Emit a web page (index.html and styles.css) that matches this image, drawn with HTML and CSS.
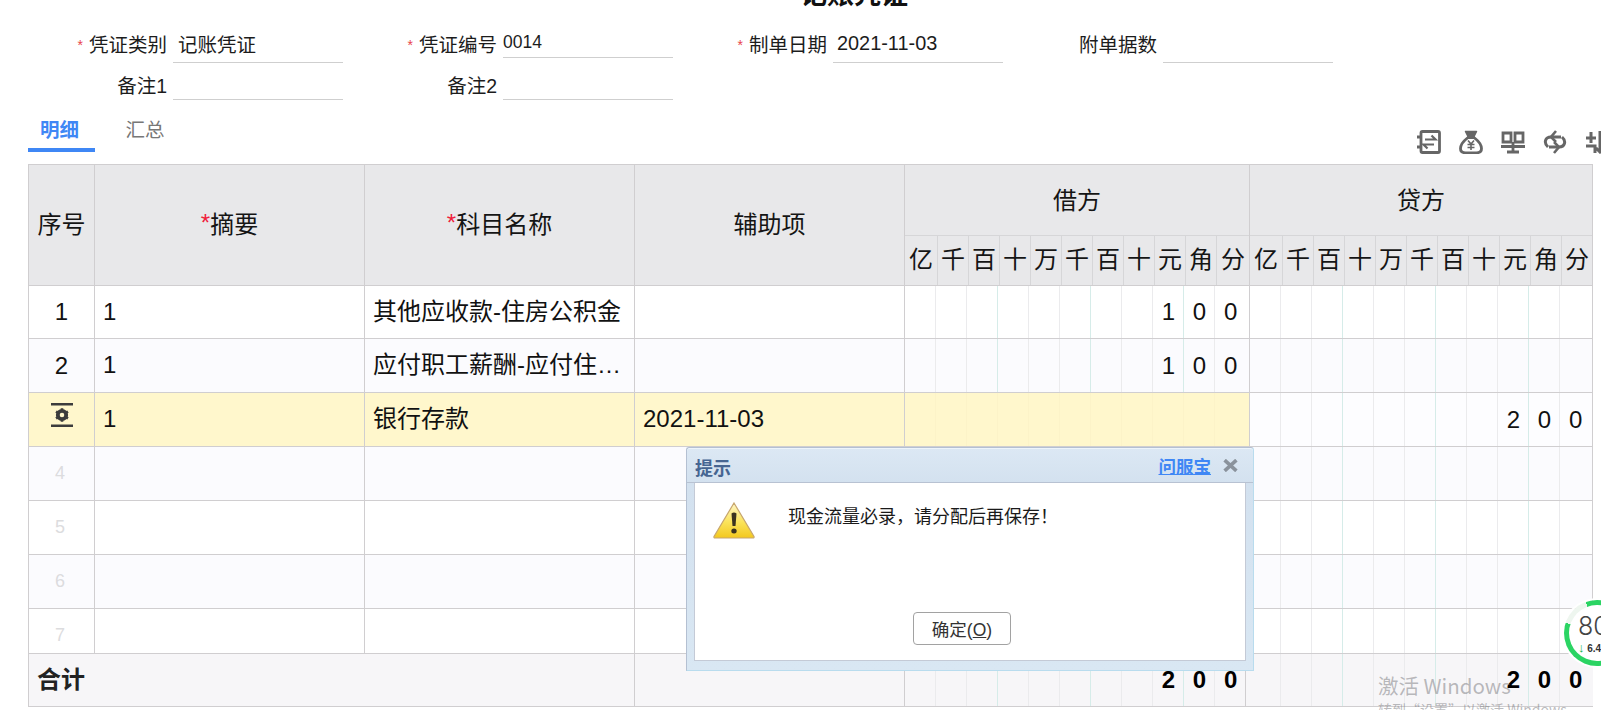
FILE: index.html
```html
<!DOCTYPE html>
<html lang="zh-CN">
<head>
<meta charset="utf-8">
<title>记账凭证</title>
<link rel="stylesheet" href="styles.css">
</head>
<body>
<div class="page">
  <h1 class="title"><span>记账凭证</span></h1>
  <div class="form">
    <div class="field"><label class="req">凭证类别</label><div class="input type-val">记账凭证</div></div>
    <div class="field"><label class="req">凭证编号</label><div class="input no-val">0014</div></div>
    <div class="field"><label class="req">制单日期</label><div class="input date-val">2021-11-03</div></div>
    <div class="field"><label>附单据数</label><div class="input"></div></div>
    <div class="field second"><label>备注1</label><div class="input"></div></div>
    <div class="field second"><label>备注2</label><div class="input"></div></div>
  </div>
  <div class="tabbar">
    <div class="tabs">
      <div class="tab active">明细</div>
      <div class="tab">汇总</div>
    </div>
    <div class="tools">
      <svg class="tool" viewBox="0 0 24 24" fill="none" stroke="#666" stroke-width="2.800"><rect x="4" y="1.500" width="18.500" height="21" rx="1.500"/><path d="M0 7h5M0 17h5"/><path d="M8 9.500h10.500L14.500 5.500M17 14.500H6.500l4 4" stroke-width="2.200"/></svg>
      <svg class="tool" viewBox="0 0 24 24" fill="none" stroke="#666" stroke-width="2.800"><path d="M6.500 1.500h11l-3 6h-5z" fill="#666" stroke-width="1.500" stroke-linejoin="round"/><path d="M9 7.500C4.500 11 1.500 15 1.500 18.500c0 3 2 4.300 5 4.300h11c3 0 5-1.300 5-4.300C22.500 15 19.500 11 15 7.500z"/><path d="M9 10.500 12 14l3-3.500M8.500 14.500h7M8.500 17.500h7M12 14v6" stroke-width="1.600"/></svg>
      <svg class="tool" viewBox="0 0 24 24" fill="none" stroke="#666" stroke-width="2.800"><path d="M2 3h8v9H2zM14 3h8v9h-8z"/><path d="M0 16.500h24M12 12v10M6 22h12" /></svg>
      <svg class="tool" viewBox="0 0 24 24" fill="none" stroke="#666" stroke-width="3"><path d="M18 7H8c-6 0-7.500 6-3 10M6 17h10c6 0 7.500-6 3-10"/><path d="m13 1-5 6 5 5M11 12l5 5-5 6" stroke-width="2.600"/></svg>
      <svg class="tool" viewBox="0 0 24 24" fill="none" stroke="#666" stroke-width="3"><path d="M1 8h10M6 2v11M1 16h9v7M15 1v21M11 18l4 4 4-4M21 4h4M21 10h4"/></svg>
    </div>
  </div>

  <div class="voucher">
    <div class="thead">
      <div class="hcell">序号</div>
      <div class="hcell"><span class="star">*</span>摘要</div>
      <div class="hcell"><span class="star">*</span>科目名称</div>
      <div class="hcell">辅助项</div>
      <div class="hgroup">
        <div class="hgroup-name">借方</div>
        <div class="units"><span>亿</span><span>千</span><span>百</span><span>十</span><span>万</span><span>千</span><span>百</span><span>十</span><span>元</span><span>角</span><span>分</span></div>
      </div>
      <div class="hgroup">
        <div class="hgroup-name">贷方</div>
        <div class="units"><span>亿</span><span>千</span><span>百</span><span>十</span><span>万</span><span>千</span><span>百</span><span>十</span><span>元</span><span>角</span><span>分</span></div>
      </div>
    </div>

    <div class="tbody">
      <div class="row">
        <div class="cell seq">1</div><div class="cell">1</div><div class="cell">其他应收款-住房公积金</div><div class="cell"></div>
        <div class="money"><span class="d yuan">1</span><span class="d jiao">0</span><span class="d fen">0</span></div>
        <div class="money"></div>
      </div>
      <div class="row tint">
        <div class="cell seq">2</div><div class="cell">1</div><div class="cell">应付职工薪酬-应付住房公积金</div><div class="cell"></div>
        <div class="money"><span class="d yuan">1</span><span class="d jiao">0</span><span class="d fen">0</span></div>
        <div class="money"></div>
      </div>
      <div class="row current">
        <div class="cell seq">
          <svg class="gear" viewBox="0 0 22 24" fill="none"><path d="M0 1.200h22M0 22.800h22" stroke="#3c3c3c" stroke-width="2.400"/><circle cx="11" cy="12" r="4.200" stroke="#3c3c3c" stroke-width="3.800"/><path d="M11 5.200v3M11 15.800v3M5 8.600l2.800 1.600M14.200 13.800l2.800 1.600M5 15.400l2.800-1.600M14.200 10.200 17 8.600" stroke="#3c3c3c" stroke-width="2.600"/></svg>
        </div>
        <div class="cell">1</div><div class="cell">银行存款</div><div class="cell">2021-11-03</div>
        <div class="money"></div>
        <div class="money plain"><span class="d yuan">2</span><span class="d jiao">0</span><span class="d fen">0</span></div>
      </div>
      <div class="row tint"><div class="cell seq ghost">4</div><div class="cell"></div><div class="cell"></div><div class="cell"></div><div class="money"></div><div class="money"></div></div>
      <div class="row"><div class="cell seq ghost">5</div><div class="cell"></div><div class="cell"></div><div class="cell"></div><div class="money"></div><div class="money"></div></div>
      <div class="row tint"><div class="cell seq ghost">6</div><div class="cell"></div><div class="cell"></div><div class="cell"></div><div class="money"></div><div class="money"></div></div>
      <div class="row"><div class="cell seq ghost">7</div><div class="cell"></div><div class="cell"></div><div class="cell"></div><div class="money"></div><div class="money"></div></div>
    </div>

    <div class="tfoot">
      <div class="cell total-label">合计</div>
      <div class="cell"></div>
      <div class="money"><span class="d yuan">2</span><span class="d jiao">0</span><span class="d fen">0</span></div>
      <div class="money"><span class="d yuan">2</span><span class="d jiao">0</span><span class="d fen">0</span></div>
    </div>
  </div>
</div>

<div class="dialog">
  <div class="dialog-head">
    <span class="dialog-title">提示</span>
    <a class="dialog-link">问服宝</a>
    <svg class="dialog-close" viewBox="0 0 14 12"><path d="M1.500 1 12.500 11M12.500 1 1.500 11" stroke="#8a929c" stroke-width="3.400"/></svg>
  </div>
  <div class="dialog-body">
    <div class="dialog-msg">
      <svg class="warn" viewBox="0 0 42 37">
        <defs><linearGradient id="wg" x1="0" y1="0" x2="0" y2="1"><stop offset="0" stop-color="#fff6c8"/><stop offset=".55" stop-color="#fbe35a"/><stop offset="1" stop-color="#f3c81e"/></linearGradient></defs>
        <path d="M21 1 41 34.500q.4 1.500-1 1.500H2q-1.400 0-1-1.500z" fill="url(#wg)" stroke="#c7a66e" stroke-width="1.200"/>
        <path d="M18.500 11.500q2.500-2 5 0L22.500 24h-3z" fill="#3b3320"/>
        <ellipse cx="21" cy="29" rx="2.700" ry="2.500" fill="#3b3320"/>
      </svg>
      <p class="dialog-text">现金流量必录，请分配后再保存！</p>
    </div>
    <div class="dialog-foot"><button class="dialog-btn">确定(<u>O</u>)</button></div>
  </div>
</div>

<div class="speed">
  <div class="speed-inner">
    <div class="speed-num">80</div>
    <div class="speed-sub"><i>↓</i> 6.4K</div>
  </div>
</div>

<div class="watermark">
  <div class="wm-1">激活 Windows</div>
  <div class="wm-2">转到“设置”以激活 Windows。</div>
</div>
</body>
</html>
```

FILE: styles.css
```css
* { box-sizing: border-box; }
html, body { margin: 0; height: 710px; overflow: hidden; background: #fff; }
body {
  font-family: "Liberation Sans", "Noto Sans CJK SC", sans-serif;
  color: #111;
  width: 1601px;
  position: relative;
}
.page { width: 1601px; height: 710px; overflow: hidden; }

.title {
  margin: 0;
  height: 12px;
  overflow: hidden;
  display: flex;
  justify-content: center;
  align-items: flex-end;
  font-size: 27px;
  line-height: 34px;
  font-weight: 700;
  padding-left: 107px;
}
.title span { display: block; flex: none; }

.form {
  display: grid;
  grid-template-columns: repeat(4, 330px);
  grid-auto-rows: 36px;
  padding: 15px 0 0 13px;
  height: 87px;
}
.field {
  display: grid;
  grid-template-columns: 154px 170px;
  column-gap: 6px;
}
.field label {
  font-size: 19.500px;
  line-height: 36px;
  text-align: right;
  color: #1c1c1c;
}
.field label.req::before {
  content: "*";
  color: #e8434c;
  font-size: 14px;
  margin-right: 6px;
  vertical-align: 2px;
}
.field.second { margin-top: 1px; }
.field.second label { padding-top: 4px; }
.input {
  border-bottom: 1px solid #cfcfcf;
  font-size: 19.500px;
  height: 36px;
  line-height: 36px;
  color: #1c1c1c;
}
.type-val { padding-left: 5px; }
.no-val { height: 31px; line-height: 30px; font-size: 17.500px; }
.date-val { padding-left: 4px; line-height: 33px; font-size: 19.900px; }

.tabbar {
  display: flex;
  height: 53px;
  padding-left: 28px;
}
.tabs { display: flex; width: 1389px; flex: none; }
.tab {
  height: 53px;
  width: 104px;
  padding: 17px 4px 0 0;
  font-size: 19.500px;
  line-height: 28px;
  color: #777;
  text-align: center;
}
.tab.active {
  width: 67px;
  color: #3f87f5;
  font-weight: 700;
  border-bottom: 4px solid #3f87f5;
}
.tools { display: flex; flex: none; width: 210px; padding-top: 31px; gap: 18px; }
.tool { width: 24px; height: 24px; flex: none; }

.voucher {
  margin: 12px 0 0 28px;
  width: 1565px;
  border-top: 1px solid #d0ced0;
  border-left: 1px solid #d0ced0;
  font-size: 24px;
}
.thead, .row {
  display: grid;
  grid-template-columns: 66px 270px 270px 270px 345px 343px;
}
.thead {
  height: 121px;
  background: #e8e8ea;
  border-bottom: 1px solid #d0ced0;
  color: #151515;
}
.hcell {
  display: flex;
  align-items: center;
  justify-content: center;
  border-right: 1px solid #d0ced0;
  padding-bottom: 5px;
}
.star { color: #f0203c; }
.hgroup { border-right: 1px solid #d0ced0; display: flex; flex-direction: column; }
.hgroup-name {
  height: 71px;
  line-height: 72px;
  text-align: center;
  border-bottom: 1px solid #d6d6d8;
}
.units {
  flex: 1;
  display: grid;
  grid-template-columns: 33px repeat(9, 31px) 1fr;
}
.units span {
  text-align: center;
  line-height: 47px;
  border-right: 1px solid #d6d6d8;
}
.units span:last-child { border-right: 0; }

.tbody { height: 367px; overflow: hidden; }
.row { height: 54px; border-bottom: 1px solid #d0ced0; background: #fff; }
.row:first-child { height: 53px; }
.row.tint { background: #fbfbfe; }
.row.current { background: #fff7cc; }

.cell {
  border-right: 1px solid #d0ced0;
  padding: 0 8px;
  line-height: 52px;
  white-space: nowrap;
  overflow: hidden;
  text-overflow: ellipsis;
}
.cell.seq {
  padding: 0;
  text-align: center;
  display: flex;
  align-items: center;
  justify-content: center;
}
.cell.ghost { color: #dcdcde; font-size: 18px; padding: 0 3px 2px 0; }
.gear { width: 22px; height: 24px; margin-top: -10px; }

.money {
  display: grid;
  grid-template-columns: repeat(10, 31px) 1fr;
  align-items: center;
  border-right: 1px solid #d0ced0;
  background-image:
    repeating-linear-gradient(to right, transparent 0 92px, #d6ece9 92px 93px),
    repeating-linear-gradient(to right, transparent 0 30px, #ebebed 30px 31px);
  background-size: 310px 100%;
  background-repeat: no-repeat;
}
.current .money:not(.plain) {
  background-image:
    repeating-linear-gradient(to right, transparent 0 30px, #fcf3c8 30px 31px);
}
.money.plain { background-color: #fdfdff; }
.d { grid-row: 1; text-align: center; line-height: 50px; }
.d.yuan { grid-column: 9; }
.d.jiao { grid-column: 10; }
.d.fen { grid-column: 11; text-align: left; padding-left: 9px; }

.tfoot {
  display: grid;
  height: 54px;
  grid-template-columns: 606px 270px 341px 347px;
  background: #f7f6f8;
  border-top: 1px solid #d0ced0;
  border-bottom: 1px solid #d0ced0;
}
.tfoot .total-label { font-weight: 700; line-height: 52px; color: #222; }
.tfoot .d { font-weight: 700; color: #000; }
.tfoot .money:last-child { padding-left: 4px; background-position: 4px 0; border-right: 0; }

.dialog {
  position: absolute;
  left: 686px;
  top: 447px;
  width: 568px;
  height: 224px;
  display: flex;
  flex-direction: column;
  border: 1px solid #b4c0d2;
  border-right-color: #b9dcee;
  border-bottom-color: #b9dcee;
  border-radius: 3px 3px 0 0;
  background: linear-gradient(#dce8f4, #d3e1ef 16%, #d9e7f3);
  box-shadow: inset 0 1px 0 #eef4fa;
}
.dialog-head {
  height: 35px;
  flex: none;
  display: flex;
  align-items: center;
  padding: 0 15px 0 8px;
  border-bottom: 1px solid #b8c2d2;
}
.dialog-title {
  font-size: 18px;
  font-weight: 700;
  color: #466592;
  margin-right: auto;
  padding-top: 3px;
}
.dialog-link {
  font-size: 17.500px;
  font-weight: 700;
  color: #3f87f5;
  text-decoration: underline;
  margin-right: 12px;
}
.dialog-close { width: 15px; height: 13px; flex: none; }
.dialog-body {
  flex: 1;
  margin: 0 7px 9px 7px;
  background: #fff;
  border: 1px solid #c4cad6;
  border-top: 0;
  display: flex;
  flex-direction: column;
  justify-content: space-between;
}
.dialog-msg { display: flex; padding: 19px 0 0 18px; }
.warn { width: 42px; height: 37px; flex: none; }
.dialog-text {
  margin: 3px 0 0 33px;
  font-size: 18px;
  line-height: 24px;
  color: #1a1a1a;
}
.dialog-foot { display: flex; justify-content: center; padding: 0 16px 15px 0; }
.dialog-btn {
  width: 98px;
  height: 33px;
  font: 17.500px "Liberation Sans", "Noto Sans CJK SC", sans-serif;
  color: #333;
  background: #fff;
  border: 1px solid #a2a2a2;
  border-radius: 4px;
  padding: 0;
}

.speed {
  position: absolute;
  left: 1564px;
  top: 600px;
  width: 66px;
  height: 66px;
  border-radius: 50%;
  padding: 5px;
  background: conic-gradient(#2bd463 0 288deg, #eef6ef 288deg 340deg, #2bd463 340deg);
  box-shadow: 0 0 0 2px #fff;
}
.speed-inner {
  height: 100%;
  border-radius: 50%;
  background: #fff;
  padding: 7px 0 0 9px;
}
.speed-num { font-size: 25px; line-height: 28px; color: #444; font-family: "Inter", sans-serif; font-weight: 300; }
.speed-sub { font-size: 10px; line-height: 13px; margin-top: 1px; color: #333; font-weight: 700; white-space: nowrap; }
.speed-sub i { color: #18b04a; font-style: normal; font-size: 13px; }

.watermark {
  position: absolute;
  left: 1378px;
  top: 671px;
  color: rgba(120, 120, 125, .5);
  font-family: "Noto Sans CJK SC", "Liberation Sans", sans-serif;
  white-space: nowrap;
  pointer-events: none;
}
.wm-1 { font-size: 20.500px; line-height: 28px; }
.wm-2 { font-size: 14px; line-height: 20px; }
```
